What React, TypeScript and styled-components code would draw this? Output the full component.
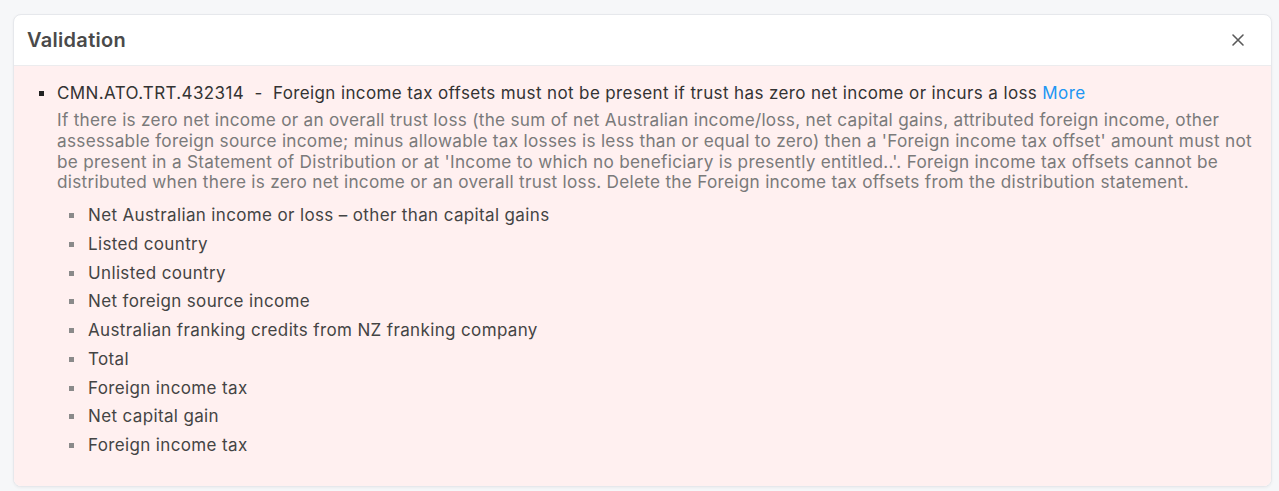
import React from "react";
import styled, { createGlobalStyle } from "styled-components";

const GlobalStyle = createGlobalStyle`
  body {
    margin: 0;
    background: #f6f7f9;
    font-family: Inter, "Noto Sans", sans-serif;
  }
`;

const fields = [
  "Net Australian income or loss – other than capital gains",
  "Listed country",
  "Unlisted country",
  "Net foreign source income",
  "Australian franking credits from NZ franking company",
  "Total",
  "Foreign income tax",
  "Net capital gain",
  "Foreign income tax",
];

function App() {
  return (
    <Page>
      <GlobalStyle />
      <Card>
        <Header>
          <Title>Validation</Title>
          <Close aria-label="close">
            <svg width="14" height="14" viewBox="0 0 14 14">
              <path d="M2 2 L12 12 M12 2 L2 12" stroke="#5a5a5a" strokeWidth="1.6" strokeLinecap="round" />
            </svg>
          </Close>
        </Header>
        <Body>
          <ErrorList>
            <ErrorItem>
              <Headline>
                CMN.ATO.TRT.432314&nbsp; - &nbsp;Foreign income tax offsets must not be present if trust has zero net income or incurs a loss <MoreLink href="#">More</MoreLink>
              </Headline>
              <Description>
                If there is zero net income or an overall trust loss (the sum of net Australian income/loss, net capital gains, attributed foreign income, other assessable foreign source income; minus allowable tax losses is less than or equal to zero) then a 'Foreign income tax offset' amount must not be present in a Statement of Distribution or at 'Income to which no beneficiary is presently entitled..'. Foreign income tax offsets cannot be distributed when there is zero net income or an overall trust loss. Delete the Foreign income tax offsets from the distribution statement.
              </Description>
              <FieldList>
                {fields.map((f, i) => (
                  <FieldItem key={i}>{f}</FieldItem>
                ))}
              </FieldList>
            </ErrorItem>
          </ErrorList>
        </Body>
      </Card>
    </Page>
  );
}

export default App;

const Page = styled.div`
  padding: 14px 7px 5px 13px;
`;

const Card = styled.div`
  background: #fff;
  border: 1px solid #e6e8ec;
  border-radius: 8px;
  overflow: hidden;
  box-shadow: 0 1px 3px rgba(0, 0, 0, 0.05);
`;

const Header = styled.div`
  display: flex;
  align-items: center;
  justify-content: space-between;
  height: 50px;
  padding: 0 26px 0 13px;
  border-bottom: 1px solid #ececee;
`;

const Title = styled.h2`
  margin: 0;
  font-size: 20px;
  letter-spacing: 0.3px;
  font-weight: 600;
  color: #4a4a4a;
`;

const Close = styled.button`
  border: 0;
  background: none;
  padding: 0;
  display: flex;
  cursor: pointer;
`;

const Body = styled.div`
  background: #fff0f0;
  padding: 14px 6px 26px 24px;
`;

const ErrorList = styled.ul`
  margin: 0;
  padding: 0;
  list-style: none;
`;

const ErrorItem = styled.li`
  position: relative;
  padding-left: 19px;
  &::before {
    content: "";
    position: absolute;
    left: 1px;
    top: 11px;
    width: 5px;
    height: 5px;
    background: #222;
  }
`;

const Headline = styled.div`
  font-size: 17px;
  letter-spacing: 0.38px;
  line-height: 26px;
  color: #333;
`;

const MoreLink = styled.a`
  color: #2196f3;
  text-decoration: none;
`;

const Description = styled.div`
  margin-top: 4px;
  font-size: 17.2px;
  letter-spacing: 0.28px;
  line-height: 20.8px;
  color: #7a7a7a;
`;

const FieldList = styled.ul`
  margin: 8px 0 0;
  padding: 0 0 0 12px;
  list-style: none;
`;

const FieldItem = styled.li`
  position: relative;
  padding-left: 19px;
  font-size: 17px;
  letter-spacing: 0.36px;
  line-height: 28.75px;
  color: #444;
  &::before {
    content: "";
    position: absolute;
    left: 0;
    top: 12px;
    width: 5px;
    height: 5px;
    background: #8a8a8a;
  }
`;
